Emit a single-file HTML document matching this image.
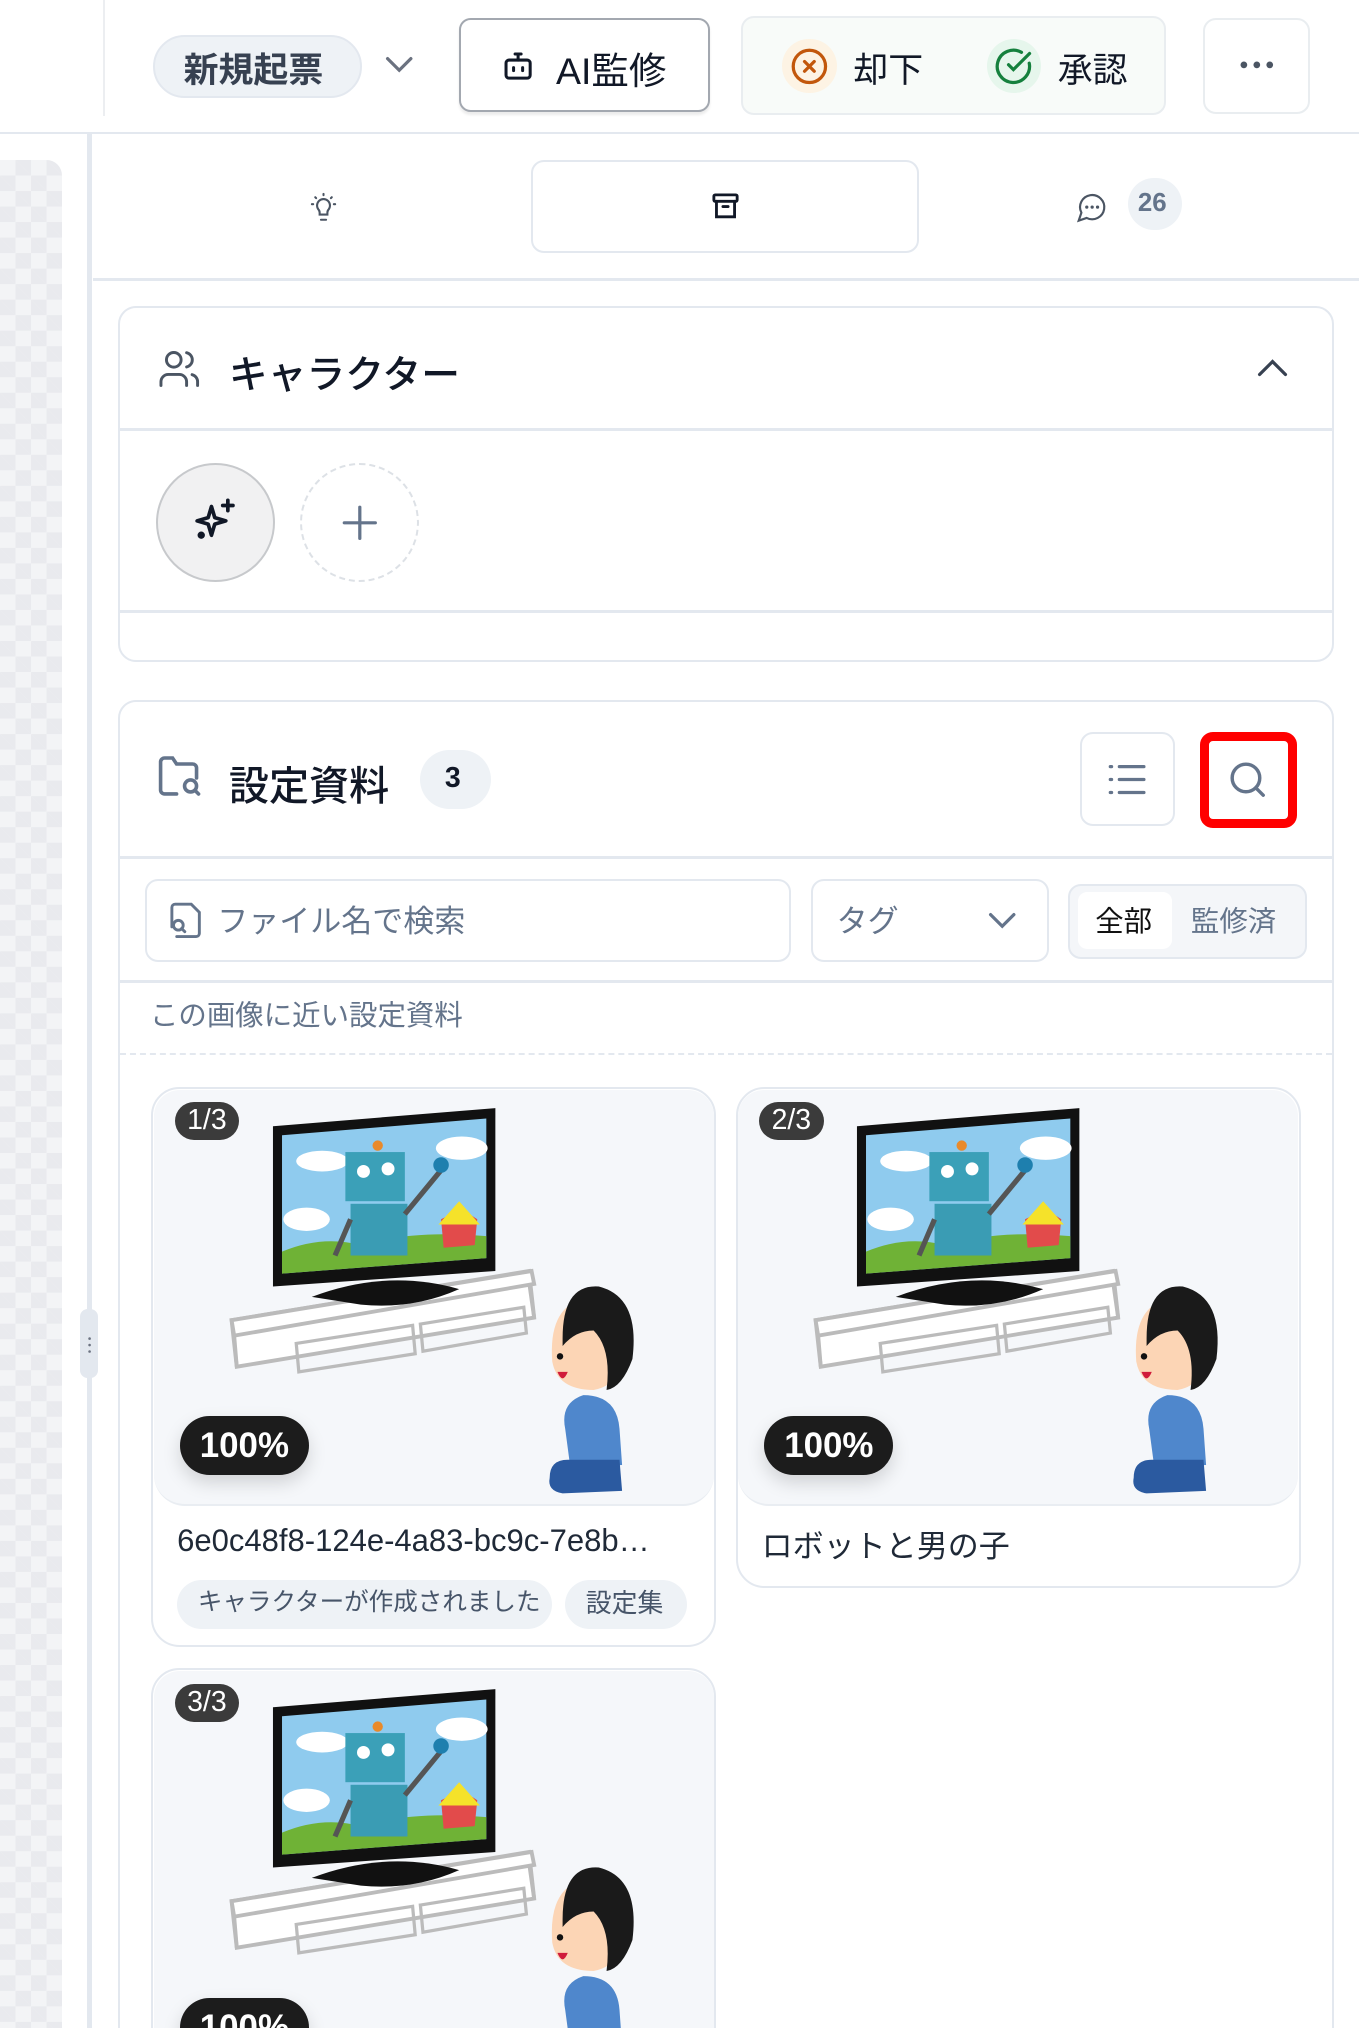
<!DOCTYPE html>
<html><head><meta charset="utf-8"><style>
html,body{margin:0;padding:0;background:#fff;overflow:hidden}
body{width:1359px;height:2028px}
#w{zoom:1.29306;width:1051px;height:1568px;position:relative;overflow:hidden;font-family:"Liberation Sans","Noto Sans CJK JP",sans-serif;color:#111827}
.a{position:absolute;box-sizing:border-box}
.t{position:absolute;white-space:nowrap}
svg{position:absolute;overflow:visible}
.card{background:#f6f8fb;border:2px solid #e3e8ef;border-radius:22px}
.img{border-radius:20px 20px 24px 24px;background:#f5f7fa;border-bottom:2px solid #e9edf2}
.badge{background:#3b3b3b;color:#fff;border-radius:16px;font-size:22px;padding:2px 0;width:50px;text-align:center}
.pct{background:#1c1c1c;color:#fff;border-radius:24px;font-size:27px;font-weight:bold;width:100px;height:46px;line-height:46px;text-align:center;box-shadow:0 6px 14px rgba(0,0,0,.15)}
</style></head><body><div id="w">
<!-- header -->
<div class="a" style="left:80px;top:0;width:1px;height:90px;background:#eceef1"></div>
<div class="a" style="left:0;top:102px;width:1051px;height:2px;background:#e3e8ef"></div>
<div class="a" style="left:118px;top:27px;width:162px;height:49px;border:2px solid #e3e8ef;background:#eef2f6;border-radius:25px"></div>
<div class="t" style="left:142px;top:33px;font-size:27px;font-weight:bold;color:#374151">新規起票</div>
<svg style="left:298px;top:43px" width="22" height="14"><path d="M2 2l9 9 9-9" fill="none" stroke="#6b7280" stroke-width="2.5" stroke-linecap="round"/></svg>
<div class="a" style="left:355px;top:14px;width:194px;height:73px;border:2px solid #a3a8b0;border-radius:9px;box-shadow:0 2px 2px rgba(0,0,0,.08)"></div>
<svg style="left:387px;top:37px" width="28" height="28" viewBox="0 0 24 24" fill="none" stroke="#111827" stroke-width="2" stroke-linecap="round"><rect x="4" y="8" width="16" height="12" rx="2"/><path d="M12 8V4M10 4h4M9 13v2M15 13v2"/></svg>
<div class="t" style="left:430px;top:32px;font-size:29px;color:#111827">AI監修</div>
<div class="a" style="left:573px;top:12px;width:329px;height:77px;border:2px solid #e9edf0;background:#f8fbf9;border-radius:10px"></div>
<div class="a" style="left:605px;top:30px;width:42px;height:42px;border-radius:50%;background:#fdf3e4"></div>
<svg style="left:611px;top:36px" width="30" height="30" viewBox="0 0 24 24" fill="none" stroke="#c2570c" stroke-width="2" stroke-linecap="round"><circle cx="12" cy="12" r="10"/><path d="M9 9l6 6M15 9l-6 6"/></svg>
<div class="t" style="left:660px;top:33px;font-size:27px">却下</div>
<div class="a" style="left:763px;top:30px;width:42px;height:42px;border-radius:50%;background:#e6f6ec"></div>
<svg style="left:769px;top:36px" width="30" height="30" viewBox="0 0 24 24" fill="none" stroke="#15803d" stroke-width="2" stroke-linecap="round"><path d="M21.8 10A10 10 0 1 1 17 3.3"/><path d="M9 11l3 3L22 4"/></svg>
<div class="t" style="left:818px;top:33px;font-size:27px">承認</div>
<div class="a" style="left:930px;top:14px;width:83px;height:74px;border:2px solid #e9edf0;border-radius:10px"></div>
<svg style="left:959px;top:47px" width="26" height="6"><circle cx="3" cy="3" r="2.6" fill="#4b5563"/><circle cx="13" cy="3" r="2.6" fill="#4b5563"/><circle cx="23" cy="3" r="2.6" fill="#4b5563"/></svg>
<!-- left -->
<div class="a" style="left:0;top:124px;width:48px;height:1444px;border-radius:0 12px 0 0;background-color:#f3f4f6;background-image:linear-gradient(45deg,#e9eaee 25%,transparent 25%,transparent 75%,#e9eaee 75%),linear-gradient(45deg,#e9eaee 25%,transparent 25%,transparent 75%,#e9eaee 75%);background-size:24px 24px;background-position:0 0,12px 12px"></div>
<div class="a" style="left:67px;top:104px;width:4px;height:1464px;background:#e3e8ef"></div>
<div class="a" style="left:62px;top:1012px;width:14px;height:54px;border-radius:6px;background:#e3e8ef"></div>
<svg style="left:67px;top:1033px" width="4" height="14"><circle cx="2" cy="2" r="1" fill="#6b7280"/><circle cx="2" cy="7" r="1" fill="#6b7280"/><circle cx="2" cy="12" r="1" fill="#6b7280"/></svg>
<!-- tabs -->
<svg style="left:238px;top:147px" width="24" height="26" viewBox="0 0 24 24" fill="none" stroke="#4b5563" stroke-width="1.6" stroke-linecap="round"><path d="M9 18h6M10 22h4M12 2v1M4 10H3M21 10h-1M5.6 4.6l.7.7M18.4 4.6l-.7.7M8 14a5 5 0 1 1 8 0c-.8.8-1 1.7-1 2.5V18H9v-1.5c0-.8-.2-1.7-1-2.5z"/></svg>
<div class="a" style="left:411px;top:124px;width:300px;height:72px;border:2px solid #e3e8ef;border-radius:10px"></div>
<svg style="left:549px;top:148px" width="24" height="24" viewBox="0 0 24 24" fill="none" stroke="#111827" stroke-width="2.2" stroke-linecap="round"><rect x="3" y="3" width="18" height="5" rx="1"/><path d="M5 8v12h14V8M10 12h4"/></svg>
<div class="a" style="left:72px;top:215px;width:979px;height:2px;background:#e3e8ef"></div>
<svg style="left:832px;top:148px" width="25" height="25" viewBox="0 0 24 24" fill="none" stroke="#4b5563" stroke-width="1.6" stroke-linecap="round"><path d="M7.9 20A9 9 0 1 0 4 16.1L2 22z"/><path d="M8 12h.01M12 12h.01M16 12h.01" stroke-width="2.4"/></svg>
<div class="a" style="left:872px;top:138px;width:42px;height:40px;border-radius:20px;background:#eef2f6"></div>
<div class="t" style="left:880px;top:146px;font-size:20px;font-weight:bold;color:#64748b">26</div>
<!-- character card -->
<div class="a" style="left:91px;top:237px;width:941px;height:275px;border:2px solid #e3e8ef;border-radius:14px;background:#fff"></div>
<svg style="left:121px;top:268px" width="36" height="34" viewBox="0 0 24 24" fill="none" stroke="#4b5563" stroke-width="1.6" stroke-linecap="round"><path d="M16 21v-2a4 4 0 0 0-4-4H6a4 4 0 0 0-4 4v2"/><circle cx="9" cy="7" r="4"/><path d="M22 21v-2a4 4 0 0 0-3-3.9M16 3.1a4 4 0 0 1 0 7.8"/></svg>
<div class="t" style="left:177px;top:266px;font-size:30px;font-weight:500">キャラクター</div>
<svg style="left:972px;top:278px" width="24" height="14"><path d="M2 12l10-10 10 10" fill="none" stroke="#374151" stroke-width="2.5" stroke-linecap="round"/></svg>
<div class="a" style="left:93px;top:331px;width:937px;height:2px;background:#e3e8ef"></div>
<div class="a" style="left:93px;top:472px;width:937px;height:2px;background:#e3e8ef"></div>
<div class="a" style="left:121px;top:358px;width:92px;height:92px;border-radius:50%;background:#f1f1f2;border:2px solid #c7c9cc"></div>
<svg style="left:148px;top:383px" width="38" height="40" viewBox="0 0 24 24" fill="none" stroke="#111827" stroke-width="1.8" stroke-linejoin="round"><path d="M10 5l1.6 5.4L17 12l-5.4 1.6L10 19l-1.6-5.4L3 12l5.4-1.6z"/><path d="M18 2v5M15.5 4.5h5" stroke-linecap="round"/><circle cx="5" cy="19" r=".9" fill="#111827"/></svg>
<div class="a" style="left:232px;top:358px;width:92px;height:92px;border-radius:50%;border:2px dashed #dde1e6"></div>
<svg style="left:265px;top:391px" width="26" height="26"><path d="M13 1v24M1 13h24" stroke="#64748b" stroke-width="2.5" stroke-linecap="round"/></svg>
<!-- settings card -->
<div class="a" style="left:91px;top:541px;width:941px;height:1100px;border:2px solid #e3e8ef;border-radius:14px;background:#fff"></div>
<svg style="left:121px;top:585px" width="38" height="34" viewBox="0 0 24 22" fill="none" stroke="#64748b" stroke-width="1.8" stroke-linecap="round"><path d="M10 19H4a2 2 0 0 1-2-2V3a2 2 0 0 1 2-2h4l2 3h8a2 2 0 0 1 2 2v5"/><circle cx="17" cy="15" r="3"/><path d="M19.2 17.2L21 19"/></svg>
<div class="t" style="left:177px;top:583px;font-size:31px;font-weight:500">設定資料</div>
<div class="a" style="left:325px;top:580px;width:55px;height:46px;border-radius:23px;background:#eef2f6"></div>
<div class="t" style="left:344px;top:589px;font-size:22px;font-weight:bold">3</div>
<div class="a" style="left:835px;top:566px;width:74px;height:73px;border:2px solid #e3e8ef;border-radius:10px"></div>
<svg style="left:858px;top:591px" width="28" height="24" fill="none" stroke="#64748b" stroke-width="2.5" stroke-linecap="round"><path d="M1 2h1M1 12h1M1 22h1M8 2h19M8 12h19M8 22h19"/></svg>
<div class="a" style="left:928px;top:566px;width:75px;height:74px;border:7px solid #ff0000;border-radius:10px;background:#fff"></div>
<svg style="left:949px;top:587px" width="32" height="32" viewBox="0 0 24 24" fill="none" stroke="#64748b" stroke-width="2" stroke-linecap="round"><circle cx="11" cy="11" r="8"/><path d="M21 21l-4.3-4.3"/></svg>
<div class="a" style="left:93px;top:662px;width:937px;height:2px;background:#e3e8ef"></div>
<div class="a" style="left:112px;top:680px;width:500px;height:64px;border:2px solid #e3e8ef;border-radius:10px"></div>
<svg style="left:130px;top:697px" width="26" height="30" viewBox="0 0 20 24" fill="none" stroke="#64748b" stroke-width="1.8" stroke-linecap="round"><path d="M7 2h7l5 5v13a2 2 0 0 1-2 2H5M2 16V4a2 2 0 0 1 2-2h3"/><circle cx="6" cy="15" r="3"/><path d="M8 17l2 2"/></svg>
<div class="t" style="left:168px;top:693px;font-size:24px;color:#64748b">ファイル名で検索</div>
<div class="a" style="left:627px;top:680px;width:184px;height:64px;border:2px solid #e3e8ef;border-radius:10px"></div>
<div class="t" style="left:647px;top:693px;font-size:24px;color:#64748b">タグ</div>
<svg style="left:764px;top:705px" width="22" height="14"><path d="M2 2l9 9 9-9" fill="none" stroke="#64748b" stroke-width="2.5" stroke-linecap="round"/></svg>
<div class="a" style="left:826px;top:684px;width:185px;height:58px;border:2px solid #e3e8ef;border-radius:10px;background:#f4f6f9"></div>
<div class="a" style="left:834px;top:690px;width:72px;height:44px;border-radius:7px;background:#fff"></div>
<div class="t" style="left:847px;top:695px;font-size:22px;color:#111">全部</div>
<div class="t" style="left:921px;top:695px;font-size:22px;color:#64748b">監修済</div>
<div class="a" style="left:93px;top:758px;width:937px;height:2px;background:#e3e8ef"></div>
<div class="t" style="left:116px;top:768px;font-size:22px;color:#64748b">この画像に近い設定資料</div>
<div class="a" style="left:93px;top:814px;width:937px;height:0;border-top:2px dashed #e3e8ef"></div>

<!-- cards -->
<div class="a card" style="left:117px;top:841px;width:437px;height:433px;background:#fff"></div>
<div class="a img" style="left:119px;top:843px;width:433px;height:322px"></div>
<div class="a card" style="left:569px;top:841px;width:437px;height:387px;background:#fff"></div>
<div class="a img" style="left:571px;top:843px;width:433px;height:322px"></div>
<div class="a card" style="left:117px;top:1290px;width:437px;height:320px;background:#fff"></div>
<div class="a img" style="left:119px;top:1292px;width:433px;height:300px;border-bottom:none"></div>

<svg width="0" height="0"><defs><g id="il">
<path d="M60 178 L290 140 L294 176 L64 214 Z" fill="#fff" stroke="#bbb" stroke-width="3"/>
<path d="M64 214 L62 190 M294 176 L290 148" stroke="#bbb" stroke-width="3"/>
<path d="M60 178 L292 140 L294 150 L62 190 Z" fill="#fff" stroke="#bbb" stroke-width="3"/>
<path d="M110 196 L200 182 L202 204 L112 218 Z M206 181 L286 168 L288 188 L208 202 Z" fill="none" stroke="#bbb" stroke-width="2.5"/>
<path d="M122 160 Q180 138 236 154 Q200 170 160 166 Z" fill="#111"/>
<path d="M92 28 L264 14 L264 140 L92 152 Z" fill="#111"/>
<path d="M99 35 L257 22 L257 130 L99 142 Z" fill="#8fcbee"/>
<path d="M99 125 Q130 112 160 120 Q200 108 257 113 L257 130 L99 142 Z" fill="#6fb236"/>
<ellipse cx="130" cy="55" rx="20" ry="8" fill="#fff"/><ellipse cx="238" cy="45" rx="20" ry="9" fill="#fff"/><ellipse cx="118" cy="100" rx="18" ry="9" fill="#fff"/>
<rect x="148" y="48" width="46" height="38" fill="#3ba0b8"/><circle cx="162" cy="63" r="5" fill="#fff"/><circle cx="181" cy="61" r="5" fill="#fff"/>
<rect x="152" y="88" width="44" height="40" fill="#3a9cb4"/><circle cx="173" cy="43" r="4" fill="#e98a2a"/>
<path d="M194 96 L222 62" stroke="#555" stroke-width="4"/><circle cx="222" cy="58" r="6" fill="#1e7fae"/>
<path d="M152 100 L140 128" stroke="#555" stroke-width="4"/>
<path d="M222 100 L238 92 L250 100 L248 120 L224 122 Z" fill="#e24b4b"/><path d="M220 104 L236 86 L252 104 Z" fill="#f5e22a"/>
<path d="M308 210 Q305 170 330 162 Q362 158 365 200 Q362 228 340 232 Q312 232 308 210 Z" fill="#fcd5b5"/>
<path d="M316 192 Q316 150 344 152 Q376 160 370 208 Q362 230 350 232 Q354 200 340 186 Q326 186 316 198 Z" fill="#1a1a1a"/>
<circle cx="314" cy="206" r="2.5" fill="#111"/><path d="M312 218 Q316 228 320 218 Z" fill="#d01b3a"/>
<path d="M318 262 Q314 242 332 236 Q358 236 360 262 L362 290 L322 292 Z" fill="#4f87cc"/>
<path d="M306 300 Q306 286 320 286 L360 286 L362 310 L316 312 Q304 310 306 300 Z" fill="#2b5aa0"/>
</g></defs></svg>
<svg style="left:119px;top:843px" width="433" height="322" viewBox="0 0 433 322"><use href="#il"/></svg>
<svg style="left:571px;top:843px" width="433" height="322" viewBox="0 0 433 322"><use href="#il"/></svg>
<svg style="left:119px;top:1292px" width="433" height="300" viewBox="0 0 433 300"><use href="#il"/></svg>

<div class="t badge" style="left:135px;top:852px">1/3</div>
<div class="t badge" style="left:587px;top:852px">2/3</div>
<div class="t badge" style="left:135px;top:1302px">3/3</div>
<div class="t pct" style="left:139px;top:1095px">100%</div>
<div class="t pct" style="left:591px;top:1095px">100%</div>
<div class="t pct" style="left:139px;top:1545px">100%</div>
<div class="t" style="left:137px;top:1178px;font-size:24px;color:#1f2937">6e0c48f8-124e-4a83-bc9c-7e8b…</div>
<div class="t" style="left:589px;top:1176px;font-size:24px;color:#1f2937">ロボットと男の子</div>
<div class="a" style="left:137px;top:1222px;width:290px;height:38px;border-radius:19px;background:#eef2f6"></div>
<div class="t" style="left:153px;top:1224px;font-size:19px;color:#475569">キャラクターが作成されました</div>
<div class="a" style="left:437px;top:1222px;width:94px;height:38px;border-radius:19px;background:#eef2f6"></div>
<div class="t" style="left:453px;top:1224px;font-size:20px;color:#475569">設定集</div>
</div></body></html>
